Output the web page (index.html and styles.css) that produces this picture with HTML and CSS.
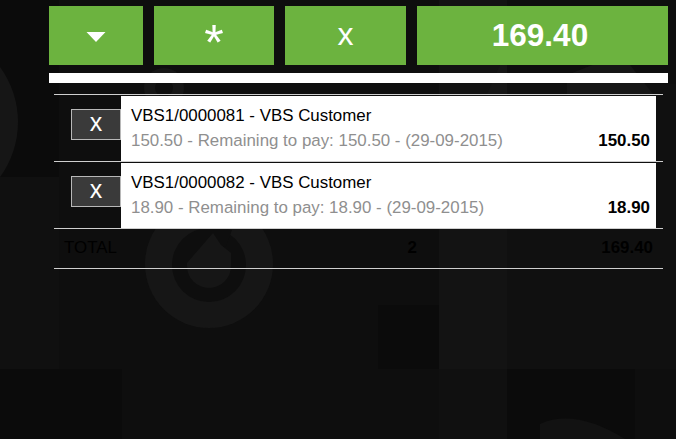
FILE: index.html
```html
<!DOCTYPE html>
<html lang="en">

<head>
  <meta charset="UTF-8">
  <meta name="viewport" content="width=device-width, initial-scale=1.0">
  <title>Invoices to pay</title>
  <link rel="stylesheet" href="styles.css">
</head>

<body>
  <svg class="backdrop" width="676" height="439" viewBox="0 0 676 439" aria-hidden="true">
    <rect class="tile-base" x="0" y="0" width="676" height="439" />
    <rect class="tile-dark" x="0" y="0" width="59" height="177" />
    <rect class="tile-mid" x="0" y="177" width="59" height="192" />
    <rect class="tile-mid" x="507" y="84" width="169" height="285" />
    <rect class="tile-light" x="439" y="0" width="68" height="369" />
    <rect class="tile-mid" x="439" y="369" width="68" height="70" />
    <rect class="tile-dark" x="378" y="305" width="61" height="64" />
    <rect class="tile-dark" x="507" y="369" width="128" height="70" />
    <rect class="tile-dark" x="0" y="369" width="122" height="70" />
    <path class="logo" d="M0 67 A93 93 0 0 1 0 177 Z" />
    <circle class="logo" cx="164" cy="88" r="20" />
    <circle class="logo-cut" cx="164" cy="88" r="9" />
    <path class="logo" d="M487 94 L500 65 L507 60 L507 94 Z" />
    <path class="logo" d="M567 94 L567 75 L600 62 L630 65 L653 94 Z" />
    <circle class="logo" cx="209" cy="264" r="64" />
    <circle class="logo-cut" cx="209" cy="265" r="37" />
    <path class="logo-cut" d="M172 262 L214 226 L232 230 L226 246 L190 262 Z" />
    <path class="logo" d="M187 263 L213 233 L221 245 L231 253 L231 266 A22 22 0 0 1 187 266 Z" />
    <path class="logo-soft" d="M540 424 Q575 408 625 439 L540 439 Z" />
  </svg>

  <div class="wrapper">
    <div class="actions">
      <button class="action action-menu" type="button">
        <svg width="20" height="10" viewBox="0 0 20 10"><path d="M0.5 0H19.5L10 10Z" /></svg>
      </button>
      <button class="action action-star" type="button">*</button>
      <button class="action action-clear" type="button">x</button>
      <button class="action action-total" type="button">169.40</button>
    </div>

    <div class="input-bar"></div>

    <table class="invoices">
      <tbody>
        <tr>
          <td class="remove-cell"><button class="remove" type="button">x</button></td>
          <td class="invoice-cell">
            <div class="invoice">
              <div class="invoice-title">VBS1/0000081 - VBS Customer</div>
              <div class="invoice-line">
                <span class="invoice-info">150.50 - Remaining to pay: 150.50 - (29-09-2015)</span>
                <strong class="invoice-amount">150.50</strong>
              </div>
            </div>
          </td>
        </tr>
        <tr>
          <td class="remove-cell"><button class="remove" type="button">x</button></td>
          <td class="invoice-cell">
            <div class="invoice">
              <div class="invoice-title">VBS1/0000082 - VBS Customer</div>
              <div class="invoice-line">
                <span class="invoice-info">18.90 - Remaining to pay: 18.90 - (29-09-2015)</span>
                <strong class="invoice-amount">18.90</strong>
              </div>
            </div>
          </td>
        </tr>
      </tbody>
    </table>

    <div class="total-row">
      <span class="total-label">TOTAL</span>
      <strong class="total-count">2</strong>
      <strong class="total-sum">169.40</strong>
    </div>
  </div>
</body>

</html>
```

FILE: styles.css
```css
html,
body {
  height: 100%;
  margin: 0;
  overflow: hidden;
}

body {
  background-color: #0e0e0e;
  font-family: "Liberation Sans", Arial, sans-serif;
}

/* background picture, sits under everything */
.backdrop {
  left: 0;
  position: absolute;
  top: 0;
  z-index: -1;
}

.tile-base { fill: #0e0e0e; }
.tile-dark { fill: #0b0b0b; }
.tile-mid { fill: #101010; }
.tile-light { fill: #131313; }
.logo { fill: #161616; }
.logo-cut { fill: #0e0e0e; }
.logo-soft { fill: #121212; }

.wrapper {
  box-sizing: border-box;
  padding: 6px 8px 0 49px;
}

.actions {
  display: flex;
  gap: 11px;
  height: 59px;
}

.action {
  align-items: center;
  background-color: #6cb33f;
  border: 0;
  color: #ffffff;
  display: flex;
  font-family: inherit;
  justify-content: center;
  padding: 0;
}

.action svg {
  display: block;
  fill: #ffffff;
  margin-top: 2px;
}

.action-menu {
  width: 94px;
}

.action-star {
  font-size: 50px;
  line-height: 1;
  padding-top: 15px;
  width: 120px;
}

.action-clear {
  font-size: 32px;
  line-height: 1;
  padding-bottom: 4px;
  width: 121px;
}

.action-total {
  flex: 1;
  font-size: 31.5px;
  font-weight: bold;
  padding-right: 5px;
}

.input-bar {
  background-color: #ffffff;
  height: 10px;
  margin-top: 8px;
}

.invoices {
  border-collapse: collapse;
  margin: 11px 5px 0;
  table-layout: fixed;
  width: 609px;
}

.invoices td {
  border-bottom: 1px solid #cfcfcf;
  border-top: 1px solid #cfcfcf;
  padding: 0;
  vertical-align: top;
}

.remove-cell {
  width: 67px;
}

.remove {
  background-color: #3a3a3a;
  border: 1px solid #b8b8b8;
  color: #ffffff;
  display: block;
  font-family: inherit;
  font-size: 25px;
  height: 31px;
  line-height: 1;
  margin: 14px 0 0 17px;
  padding: 0 0 4px;
  width: 50px;
}

.invoices .invoice-cell {
  padding-right: 7px;
}

.invoice {
  background-color: #ffffff;
  box-sizing: border-box;
  height: 65px;
  margin-top: 1px;
  padding: 10px 6px 0 10px;
}

.invoice-title {
  color: #000000;
  font-size: 16.9px;
  line-height: 20px;
}

.invoice-line {
  align-items: baseline;
  display: flex;
  font-size: 16.9px;
  justify-content: space-between;
  line-height: 20px;
  margin-top: 5px;
}

.invoice-info {
  color: #8f8f8f;
}

.invoice-amount {
  color: #000000;
}

.total-row {
  border-bottom: 1px solid #cfcfcf;
  color: #000000;
  display: grid;
  font-size: 16.9px;
  grid-template-columns: 1fr 118px 246px;
  height: 39px;
  line-height: 38px;
  margin: 0 5px;
  width: 609px;
}

.total-label {
  padding-left: 10px;
}

.total-count,
.total-sum {
  text-align: right;
}

.total-sum {
  padding-right: 10px;
}
```
